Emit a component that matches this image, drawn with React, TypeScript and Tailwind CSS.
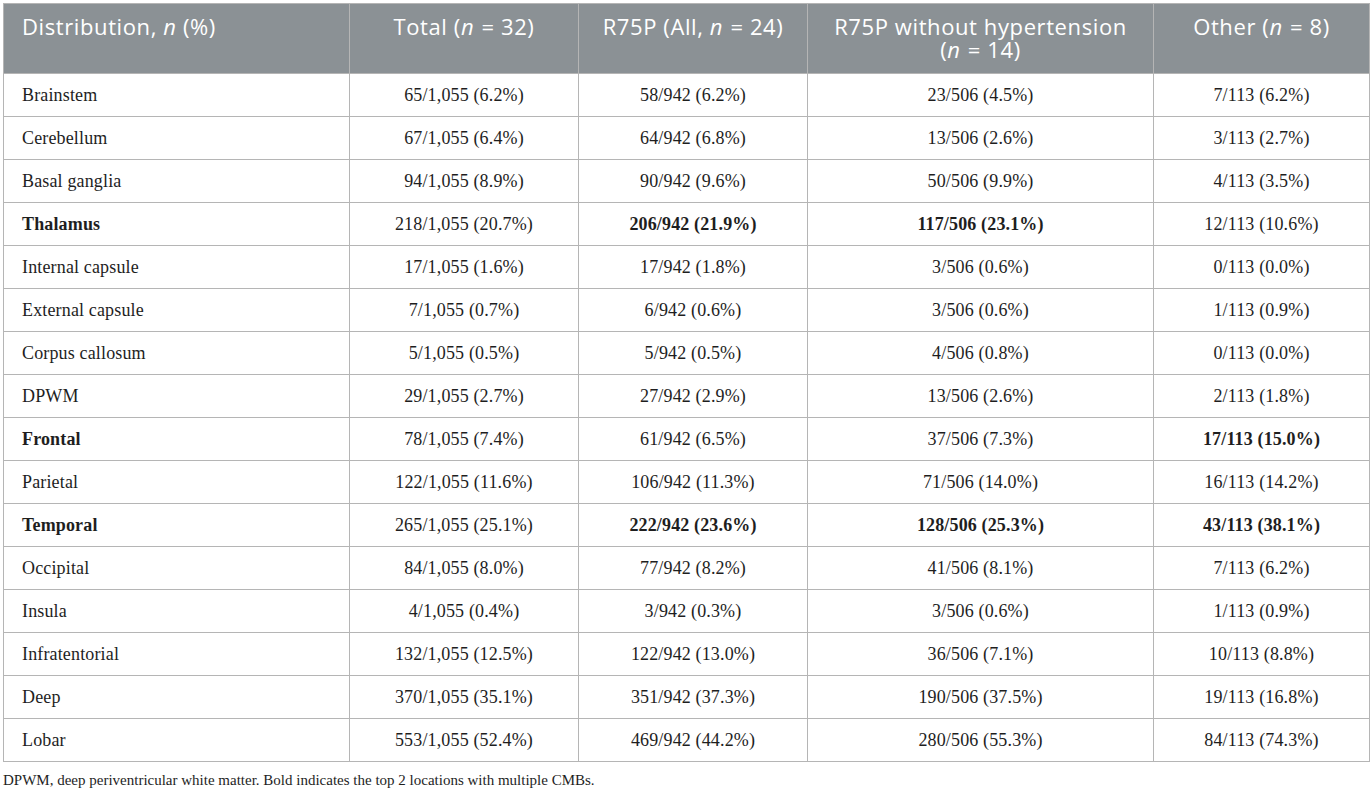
const ROWS: { label: string; cells: string[]; bold?: boolean; b?: number[] }[] = [
  { label: 'Brainstem', cells: ['65/1,055 (6.2%)', '58/942 (6.2%)', '23/506 (4.5%)', '7/113 (6.2%)'] },
  { label: 'Cerebellum', cells: ['67/1,055 (6.4%)', '64/942 (6.8%)', '13/506 (2.6%)', '3/113 (2.7%)'] },
  { label: 'Basal ganglia', cells: ['94/1,055 (8.9%)', '90/942 (9.6%)', '50/506 (9.9%)', '4/113 (3.5%)'] },
  { label: 'Thalamus', bold: true, b: [1, 2], cells: ['218/1,055 (20.7%)', '206/942 (21.9%)', '117/506 (23.1%)', '12/113 (10.6%)'] },
  { label: 'Internal capsule', cells: ['17/1,055 (1.6%)', '17/942 (1.8%)', '3/506 (0.6%)', '0/113 (0.0%)'] },
  { label: 'External capsule', cells: ['7/1,055 (0.7%)', '6/942 (0.6%)', '3/506 (0.6%)', '1/113 (0.9%)'] },
  { label: 'Corpus callosum', cells: ['5/1,055 (0.5%)', '5/942 (0.5%)', '4/506 (0.8%)', '0/113 (0.0%)'] },
  { label: 'DPWM', cells: ['29/1,055 (2.7%)', '27/942 (2.9%)', '13/506 (2.6%)', '2/113 (1.8%)'] },
  { label: 'Frontal', bold: true, b: [3], cells: ['78/1,055 (7.4%)', '61/942 (6.5%)', '37/506 (7.3%)', '17/113 (15.0%)'] },
  { label: 'Parietal', cells: ['122/1,055 (11.6%)', '106/942 (11.3%)', '71/506 (14.0%)', '16/113 (14.2%)'] },
  { label: 'Temporal', bold: true, b: [1, 2, 3], cells: ['265/1,055 (25.1%)', '222/942 (23.6%)', '128/506 (25.3%)', '43/113 (38.1%)'] },
  { label: 'Occipital', cells: ['84/1,055 (8.0%)', '77/942 (8.2%)', '41/506 (8.1%)', '7/113 (6.2%)'] },
  { label: 'Insula', cells: ['4/1,055 (0.4%)', '3/942 (0.3%)', '3/506 (0.6%)', '1/113 (0.9%)'] },
  { label: 'Infratentorial', cells: ['132/1,055 (12.5%)', '122/942 (13.0%)', '36/506 (7.1%)', '10/113 (8.8%)'] },
  { label: 'Deep', cells: ['370/1,055 (35.1%)', '351/942 (37.3%)', '190/506 (37.5%)', '19/113 (16.8%)'] },
  { label: 'Lobar', cells: ['553/1,055 (52.4%)', '469/942 (44.2%)', '280/506 (55.3%)', '84/113 (74.3%)'] },
];

// "n = 24" with italic n
const Eq = ({ v }: { v: string }) => (
  <>
    <i className="pr-[1px]">n</i> = {v}
  </>
);

export default function App() {
  const th = 'border border-[#b5b5b5] align-top pt-[11px] pb-2 px-3 font-normal text-white text-[22px] tracking-[0.6px] leading-[23px]';
  const td = 'border border-[#b5b5b5] h-[43px] px-[18px] text-[18px] tracking-[0.15px] text-[#1e1e1e] align-middle';

  return (
    <div className="bg-white w-[1372px] h-[792px] pt-[3px] pl-[3px]">
      <table className="table-fixed border-collapse w-[1366px]">
        <colgroup>
          <col className="w-[346px]" />
          <col className="w-[229px]" />
          <col className="w-[229px]" />
          <col className="w-[346px]" />
          <col className="w-[216px]" />
        </colgroup>
        <thead>
          <tr className="bg-[#8b9195] h-[70px] font-['Open_Sans',sans-serif]">
            <th className={`${th} text-left pl-[18px]`}>Distribution, <i>n</i> (%)</th>
            <th className={`${th} text-center`}>Total (<Eq v="32" />)</th>
            <th className={`${th} text-center`}>R75P (All, <Eq v="24" />)</th>
            <th className={`${th} text-center`}>
              R75P without hypertension
              <br />
              (<Eq v="14" />)
            </th>
            <th className={`${th} text-center`}>Other (<Eq v="8" />)</th>
          </tr>
        </thead>
        <tbody className="font-['Liberation_Serif',serif]">
          {ROWS.map((r) => (
            <tr key={r.label}>
              <td className={`${td} text-left ${r.bold ? 'font-bold' : ''}`}>{r.label}</td>
              {r.cells.map((c, i) => (
                <td key={i} className={`${td} text-center ${r.b?.includes(i) ? 'font-bold' : ''}`}>{c}</td>
              ))}
            </tr>
          ))}
        </tbody>
      </table>
      <p className="mt-[7px] font-['Liberation_Serif',serif] text-[15px] text-[#1e1e1e]">
        DPWM, deep periventricular white matter. Bold indicates the top 2 locations with multiple CMBs.
      </p>
    </div>
  );
}
